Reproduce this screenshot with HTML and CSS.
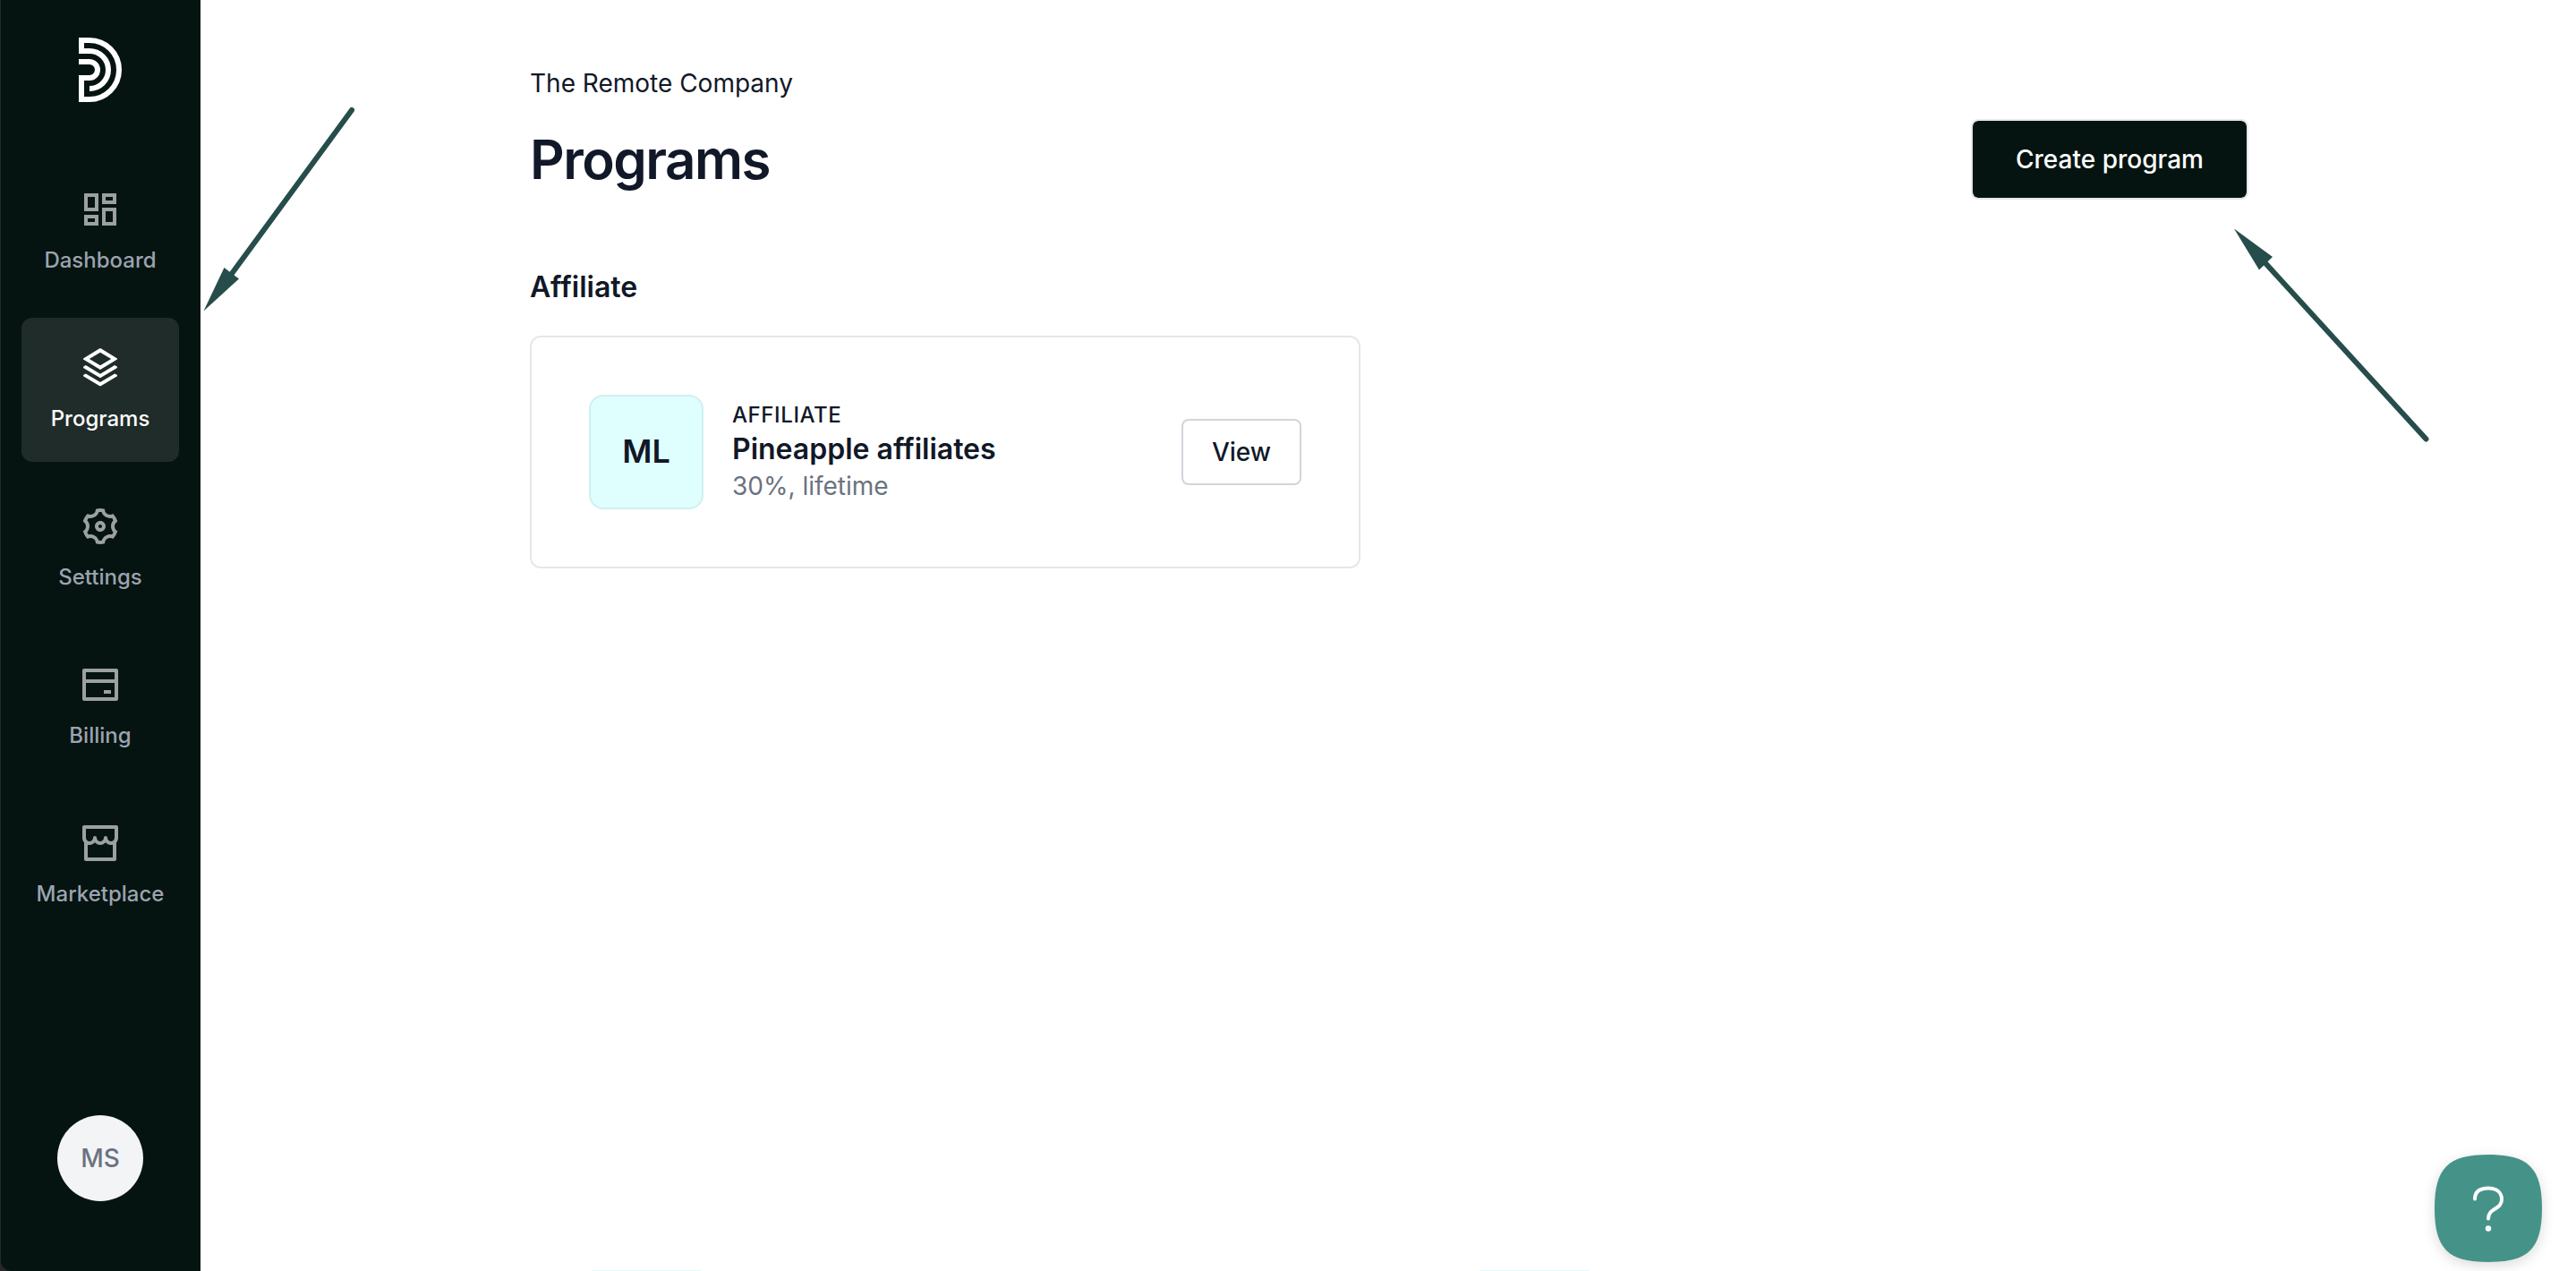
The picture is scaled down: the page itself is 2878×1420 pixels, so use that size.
FILE: index.html
```html
<!DOCTYPE html>
<html lang="en">
<head>
<meta charset="utf-8">
<title>Programs</title>
<link rel="stylesheet" href="styles.css">
</head>
<body>
<div class="app">
  <aside class="sidebar">
    <svg class="logo" viewBox="0 0 8 12" fill="none" stroke="#fff"><path d="M2 9.5A3.5 3.5 0 0 0 2 2.5H.5V.5H2A5.5 5.5 0 0 1 2 11.5H.5V7.5H2A1.5 1.5 0 0 0 2 4.5H0"/></svg>
    <nav class="nav">
      <a class="nav-item">
        <svg class="icon" viewBox="0 0 24 24"><path fill-rule="evenodd" d="M3 3h8v10H3zM5 5v6h4V5zM13 3h8v6h-8zM15 5v2h4V5zM13 11h8v10h-8zM15 13v6h4v-6zM3 15h8v6H3zM5 17v2h4v-2z"/></svg>
        <span>Dashboard</span>
      </a>
      <a class="nav-item active">
        <svg class="icon" viewBox="0 0 24 24"><path d="M20.0833 15.1999L21.2854 15.9212C21.5221 16.0633 21.5989 16.3704 21.4569 16.6072C21.4146 16.6776 21.3557 16.7365 21.2854 16.7787L12.5144 22.0412C12.1977 22.2313 11.8021 22.2313 11.4854 22.0412L2.71451 16.7787C2.47772 16.6366 2.40093 16.3295 2.54301 16.0927C2.58523 16.0223 2.64413 15.9634 2.71451 15.9212L3.9166 15.1999L11.9999 20.0499L20.0833 15.1999ZM20.0833 10.4999L21.2854 11.2212C21.5221 11.3633 21.5989 11.6704 21.4569 11.9072C21.4146 11.9776 21.3557 12.0365 21.2854 12.0787L11.9999 17.6499L2.71451 12.0787C2.47772 11.9366 2.40093 11.6295 2.54301 11.3927C2.58523 11.3223 2.64413 11.2634 2.71451 11.2212L3.9166 10.4999L11.9999 15.3499L20.0833 10.4999ZM12.5144 1.30864L21.2854 6.5712C21.5221 6.71327 21.5989 7.0204 21.4569 7.25719C21.4146 7.32757 21.3557 7.38647 21.2854 7.42869L11.9999 12.9999L2.71451 7.42869C2.47772 7.28662 2.40093 6.97949 2.54301 6.7427C2.58523 6.67232 2.64413 6.61342 2.71451 6.5712L11.4854 1.30864C11.8021 1.11864 12.1977 1.11864 12.5144 1.30864ZM11.9999 3.33233L5.88723 6.99995L11.9999 10.6676L18.1126 6.99995L11.9999 3.33233Z"/></svg>
        <span>Programs</span>
      </a>
      <a class="nav-item">
        <svg class="icon" viewBox="0 0 24 24"><path d="M3.33946 17.0002C2.90721 16.2515 2.58277 15.4702 2.36133 14.6741C3.3338 14.1779 3.99972 13.1668 3.99972 12.0002C3.99972 10.8345 3.3348 9.824 2.36353 9.32741C2.81025 7.71651 3.65857 6.21627 4.86474 4.99001C5.7807 5.58416 6.98935 5.65534 7.99972 5.072C9.01009 4.48866 9.55277 3.40635 9.4962 2.31604C11.1613 1.8846 12.8847 1.90004 14.5031 2.31862C14.4475 3.40806 14.9901 4.48912 15.9997 5.072C17.0101 5.65532 18.2187 5.58416 19.1346 4.99007C19.7133 5.57986 20.2277 6.25151 20.66 7.00021C21.0922 7.7489 21.4167 8.53025 21.6381 9.32628C20.6656 9.82247 19.9997 10.8336 19.9997 12.0002C19.9997 13.166 20.6646 14.1764 21.6359 14.673C21.1892 16.2839 20.3409 17.7841 19.1347 19.0104C18.2187 18.4163 17.0101 18.3451 15.9997 18.9284C14.9893 19.5117 14.4467 20.5941 14.5032 21.6844C12.8382 22.1158 11.1148 22.1004 9.49632 21.6818C9.55191 20.5923 9.00929 19.5113 7.99972 18.9284C6.98938 18.3451 5.78079 18.4162 4.86484 19.0103C4.28617 18.4205 3.77172 17.7489 3.33946 17.0002ZM8.99972 17.1964C10.0911 17.8265 10.8749 18.8227 11.2503 19.9659C11.7486 20.0133 12.2502 20.014 12.7486 19.9675C13.1238 18.8237 13.9078 17.8268 14.9997 17.1964C16.0916 16.5659 17.347 16.3855 18.5252 16.6324C18.8146 16.224 19.0648 15.7892 19.2729 15.334C18.4706 14.4373 17.9997 13.2604 17.9997 12.0002C17.9997 10.74 18.4706 9.5632 19.2729 8.6665C19.1688 8.4405 19.0538 8.21822 18.9279 8.00021C18.802 7.78219 18.667 7.57148 18.5233 7.36842C17.3457 7.61476 16.0911 7.43414 14.9997 6.80405C13.9083 6.17395 13.1246 5.17768 12.7491 4.03455C12.2509 3.98714 11.7492 3.98646 11.2509 4.03292C10.8756 5.17671 10.0916 6.17364 8.99972 6.80405C7.9078 7.43447 6.65245 7.61494 5.47428 7.36803C5.18485 7.77641 4.93463 8.21117 4.72656 8.66637C5.52881 9.56311 5.99972 10.74 5.99972 12.0002C5.99972 13.2604 5.52883 14.4372 4.72656 15.3339C4.83067 15.5599 4.94564 15.7822 5.07152 16.0002C5.19739 16.2182 5.3324 16.4289 5.47612 16.632C6.65377 16.3857 7.90838 16.5663 8.99972 17.1964ZM11.9997 15.0002C10.3429 15.0002 8.99972 13.6571 8.99972 12.0002C8.99972 10.3434 10.3429 9.00021 11.9997 9.00021C13.6566 9.00021 14.9997 10.3434 14.9997 12.0002C14.9997 13.6571 13.6566 15.0002 11.9997 15.0002ZM11.9997 13.0002C12.552 13.0002 12.9997 12.5525 12.9997 12.0002C12.9997 11.4479 12.552 11.0002 11.9997 11.0002C11.4474 11.0002 10.9997 11.4479 10.9997 12.0002C10.9997 12.5525 11.4474 13.0002 11.9997 13.0002Z"/></svg>
        <span>Settings</span>
      </a>
      <a class="nav-item">
        <svg class="icon" viewBox="0 0 24 24"><path fill-rule="evenodd" d="M3 3h18a1 1 0 0 1 1 1v16a1 1 0 0 1-1 1H3a1 1 0 0 1-1-1V4a1 1 0 0 1 1-1zM20 11H4v8h16zM20 9V5H4v4zM14 15h4v2h-4z"/></svg>
        <span>Billing</span>
      </a>
      <a class="nav-item">
        <svg class="icon" viewBox="0 0 24 24"><path d="M21 11.6458V21C21 21.5523 20.5523 22 20 22H4C3.44772 22 3 21.5523 3 21V11.6458C2.37764 10.9407 2 10.0144 2 9V3C2 2.44772 2.44772 2 3 2H21C21.5523 2 22 2.44772 22 3V9C22 10.0144 21.6224 10.9407 21 11.6458ZM19 12.874C18.6804 12.9562 18.3453 13 18 13C16.8053 13 15.7329 12.4762 15 11.6458C14.2671 12.4762 13.1947 13 12 13C10.8053 13 9.73294 12.4762 9 11.6458C8.26706 12.4762 7.19469 13 6 13C5.6547 13 5.31962 12.9562 5 12.874V20H19V12.874ZM14 9C14 8.44772 14.4477 8 15 8C15.5523 8 16 8.44772 16 9C16 10.1046 16.8954 11 18 11C19.1046 11 20 10.1046 20 9V4H4V9C4 10.1046 4.89543 11 6 11C7.10457 11 8 10.1046 8 9C8 8.44772 8.44772 8 9 8C9.55228 8 10 8.44772 10 9C10 10.1046 10.8954 11 12 11C13.1046 11 14 10.1046 14 9Z"/></svg>
        <span>Marketplace</span>
      </a>
    </nav>
    <div class="avatar">MS</div>
  </aside>
  <main class="main">
    <p class="company">The Remote Company</p>
    <header class="header">
      <h1 class="title">Programs</h1>
      <button class="btn-primary">Create program</button>
    </header>
    <h2 class="section">Affiliate</h2>
    <article class="card">
      <div class="tile">ML</div>
      <div class="info">
        <span class="kind">AFFILIATE</span>
        <strong class="name">Pineapple affiliates</strong>
        <span class="terms">30%, lifetime</span>
      </div>
      <button class="btn-outline">View</button>
    </article>
    <div class="next-row"><span class="peek"></span><span class="peek"></span></div>
  </main>
</div>
<svg class="arrows" viewBox="0 0 2878 1420" fill="#264d4b" stroke="#264d4b" stroke-width="6" stroke-linecap="round">
  <path d="M393 123L258 307"/>
  <path stroke="none" d="M227.500 347.500L250.500 299L267 311.500Z"/>
  <path d="M2710.500 490.500L2531 294"/>
  <path stroke="none" d="M2496 255.500L2539 287L2524 301.500Z"/>
</svg>
<svg class="help" viewBox="0 0 188 150" fill="none">
  <path fill="#459388" d="M90 20C135 20 150 35 150 80S135 140 90 140S30 125 30 80S45 20 90 20Z"/>
  <path stroke="#fff" stroke-width="4" stroke-linecap="round" d="M75 69.500C75 61 81 57.500 90 57.500C99 57.500 105 62 105 70C105 82 90 79 90 91.500"/>
  <circle cx="90" cy="102.500" r="3.200" fill="#fff"/>
</svg>
</body>
</html>
```
FILE: styles.css
```css
* { box-sizing: border-box; }
body { margin: 0; background: #fff; color: #111827; font-family: Inter, "Liberation Sans", sans-serif; }
h1, h2, p { margin: 0; }
button { font: inherit; }
.app {
  display: flex; height: 1420px; overflow: hidden;
  background: linear-gradient(#2b2728, #2b2728) 0 100% / 16px 16px no-repeat;
}

.sidebar {
  display: flex; flex-direction: column; align-items: center;
  width: 224px; flex: none; padding: 42px 0 78px;
  background: #051411; box-shadow: inset 1px 0 #1f2c29; border-bottom-left-radius: 12px;
}
.logo { width: 48px; height: 72px; }
.nav { display: flex; flex-direction: column; gap: 16px; margin-top: 64px; }
.nav-item {
  display: flex; flex-direction: column; align-items: center; gap: 16px;
  width: 176px; height: 161px; padding-top: 32px; border-radius: 12px;
  color: #9ca3af; font-size: 24px; line-height: 33px; font-weight: 500;
}
.icon { width: 48px; height: 48px; fill: #9ba1a0; }
.active { background: #1f2c29; color: #fff; }
.active .icon { fill: #fff; }
.avatar {
  display: flex; align-items: center; justify-content: center;
  width: 96px; height: 96px; margin-top: auto; border-radius: 50%;
  background: #f3f4f6; color: #6b7280; font-size: 28px; font-weight: 500;
}

.main { display: flex; flex-direction: column; width: 2288px; padding: 73px 0 0 368px; }
.company { font-size: 28px; line-height: 40px; }
.header { display: flex; align-items: center; justify-content: space-between; height: 90px; margin-top: 20px; }
.title { font-size: 60px; line-height: 72px; font-weight: 600; letter-spacing: -1.5px; }
.btn-primary {
  width: 310px; height: 90px; padding: 0; border: 2px solid #e5e7eb; border-radius: 8px;
  background: #051411; background-clip: padding-box; color: #fff; font-size: 28px; font-weight: 500;
}
.section { margin-top: 78px; font-size: 32px; line-height: 39px; font-weight: 600; }
.card {
  display: flex; align-items: center; width: 928px; height: 260px; margin-top: 35px;
  padding: 0 64px; border: 2px solid #e5e7e8; border-radius: 12px;
}
.tile {
  display: flex; align-items: center; justify-content: center; width: 128px; height: 128px; padding-bottom: 2px;
  border: 2px solid #d0f0ee; border-radius: 16px; background: #dffffe; font-size: 36px; font-weight: 600;
}
.info { display: flex; flex-direction: column; margin: 0 auto 0 32px; padding: 1px 0; }
.kind { font-size: 24px; line-height: 36px; font-weight: 500; letter-spacing: .6px; }
.name { font-size: 32px; line-height: 40px; font-weight: 600; }
.terms { color: #6b7280; font-size: 28px; line-height: 42px; }
.btn-outline {
  width: 134px; height: 74px; padding: 0; border: 2px solid #d1d5db; border-radius: 8px;
  background: #fff; color: #111827; font-size: 28px; font-weight: 500;
}
.next-row { display: flex; gap: 870px; margin: auto 0 0 69px; }
.peek { width: 122px; height: 1px; background: #e4f8f8; }

.arrows { position: absolute; left: 0; top: 0; width: 2878px; height: 1420px; pointer-events: none; }
.help { position: absolute; left: 2690px; top: 1270px; width: 188px; height: 150px; filter: drop-shadow(0 4px 7px rgba(0, 0, 0, .14)); }
```
